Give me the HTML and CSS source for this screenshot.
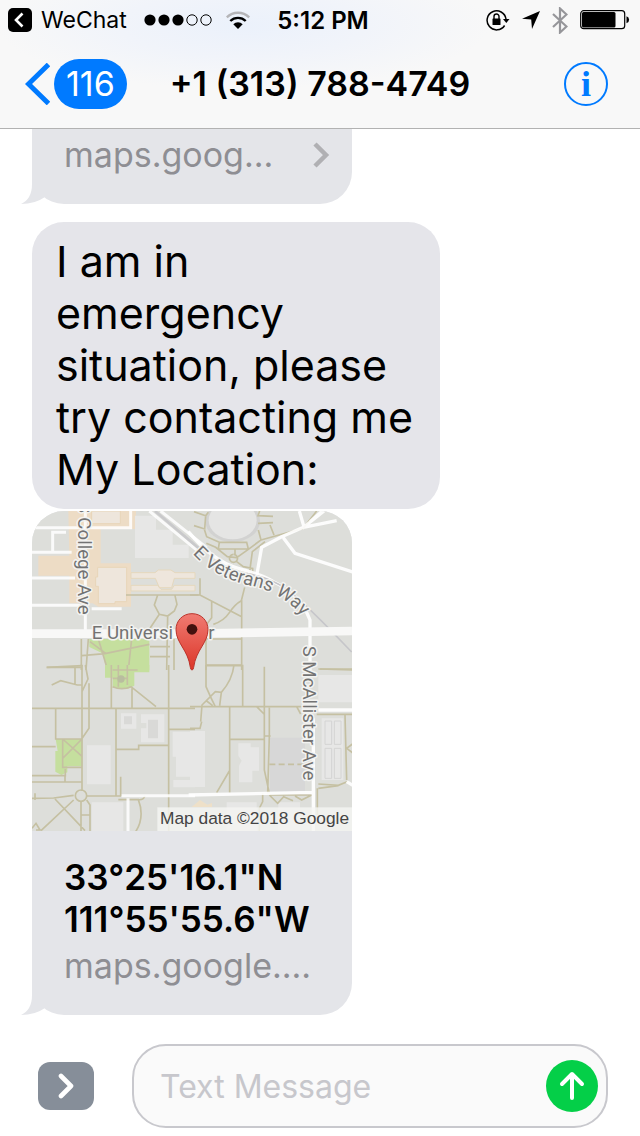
FILE: index.html
```html
<!DOCTYPE html>
<html lang="en">
<head>
<meta charset="utf-8">
<meta name="viewport" content="width=device-width, initial-scale=1">
<title>Messages</title>
<link rel="stylesheet" href="styles.css">
</head>
<body>
<header class="top">
  <div class="status">
    <div class="status-left">
      <a class="return" href="#">
        <svg width="24" height="24" viewBox="0 0 24 24" aria-hidden="true"><rect width="24" height="24" rx="5"/><path d="M14.500 5.500L8 12l6.500 6.500" fill="none" stroke="#fff" stroke-width="2.600"/></svg>
        <span>WeChat</span>
      </a>
      <svg class="signal" width="68" height="12" viewBox="0 0 68 12" aria-hidden="true"><circle cx="6" cy="6" r="5.600"/><circle cx="20" cy="6" r="5.600"/><circle cx="34" cy="6" r="5.600"/><g fill="none" stroke="#000"><circle cx="48" cy="6" r="5.200"/><circle cx="62" cy="6" r="5.200"/></g></svg>
      <svg class="wifi" width="24" height="18" viewBox="0 0 24 18" aria-hidden="true"><g fill="none" stroke-width="2.400"><path d="M.8 6.300a16 16 0 0 1 22.400 0" stroke="#b5b5b8"/><path d="M4.300 10a11 11 0 0 1 15.400 0" stroke="#000"/></g><path d="M7.300 13.200a6.700 6.700 0 0 1 9.400 0L12 18z"/></svg>
    </div>
    <span class="time">5:12 PM</span>
    <div class="status-right">
      <svg width="24" height="22" viewBox="0 0 24 22" aria-hidden="true"><path d="M18.600 16.500A9.500 9.500 0 1 1 20 10" fill="none" stroke="#000" stroke-width="1.500"/><path d="M17 10h6.500l-3.200 4z"/><rect x="6.500" y="9.500" width="8" height="6.500" rx=".6"/><path d="M8 10V7.500a2.500 2.500 0 0 1 5 0V10" fill="none" stroke="#000" stroke-width="1.400"/></svg>
      <svg width="18" height="18" viewBox="0 0 18 18" aria-hidden="true"><path d="M18 0L10 18 9.200 8.600 0 7.800z"/></svg>
      <svg width="16" height="27" viewBox="0 0 16 27" aria-hidden="true"><path d="M1 7l13.500 12.500L8 25.500V1.500L14.500 7.500 1 20" fill="none" stroke="#96969a" stroke-width="2.200"/></svg>
      <svg width="50" height="20" viewBox="0 0 50 20" aria-hidden="true"><rect x=".7" y=".7" width="44" height="18" rx="3" fill="none" stroke="#000" stroke-width="1.200"/><rect x="2" y="2" width="33.500" height="15.400" rx="1.500"/><path d="M46.500 6.300q2.600.6 2.600 3.500t-2.600 3.500z"/></svg>
    </div>
  </div>
  <nav class="nav">
    <a class="back" href="#" aria-label="Back, 116 unread">
      <svg width="25" height="42" viewBox="0 0 25 42" aria-hidden="true"><path d="M23.500 1.500L3.500 21l20 19.500" fill="none" stroke="#007aff" stroke-width="5"/></svg>
      <span class="count">116</span>
    </a>
    <h1 class="title">+1 (313) 788-4749</h1>
    <button class="info" type="button" aria-label="Details">i</button>
  </nav>
</header>

<main class="thread">
  <a class="bubble link clipped" href="#">
    <span class="url">maps.goog...</span>
    <svg width="18" height="28" viewBox="0 0 18 28" aria-hidden="true"><path d="M3 3l11 11L3 25" fill="none" stroke="#b0b0b3" stroke-width="4.500"/></svg>
    <svg class="tail" width="24" height="32" viewBox="0 0 24 32" aria-hidden="true"><path d="M11 0V12Q11 27 0 32 14 32 24 25V0z"/></svg>
  </a>
  <p class="bubble text">I am in emergency situation, please try contacting me<br>My Location:</p>
  <a class="bubble link" href="#">
    <svg class="map" viewBox="0 0 960 960" role="img" aria-label="Map of the shared location">
      <rect width="960" height="960" fill="#dddeda"/>
      <g transform="translate(-6 -18)">
        <path d="M115 18H318V72H212V175H303V305H205L188 295H118V212H25V152H118z" fill="#eddcc5"/>
        <path d="M185 18h86v38h-86zM203 187h87v103h-35v6h-50v-52h-8v-28h6z" fill="#eee6dc" stroke="#e8d5b8" stroke-width="3"/>
        <path d="M303 203h72l10-8h38l12 8h60v17h-62l-8 28h-37l-12-28h-73zM303 241h80l10 12h32l8-12h62v17H303z" fill="#eee6dc" stroke="#e5d8bd" stroke-width="3"/>
        <path d="M315 32h63v42h50v45h48v40H315z" fill="#e7e7e6"/>
        <path d="M178 402h180v94H228l-8-50-42-20z" fill="#c5df9e"/>
        <g fill="none" stroke="#fff" stroke-opacity=".85" stroke-width="9">
          <path d="M6 68H302V18M68 140V82h40M6 142H125M6 219H135M6 301H150M185 311h90"/>
          <path d="M166 18V385"/>
          <path d="M358 18L512 145M392 18L530 128"/>
        </g>
        <path d="M375 18L515 137" stroke="#c9c9cb" stroke-width="8"/>
        <g fill="none" stroke="#c5c0a2" stroke-width="5">
          <path d="M288 270H506M383 270l-10 30 15 28 25 5 20-15 8-20-6-26M388 328l-28 42M413 333l-3 162M154 402v93M175 402l-7 93M50 487l108-5M155 452l70-6 133-28M205 402l28 93M305 402l-10 93M180 410l48 36M360 425h60M360 455h60M432 402v93"/>
        </g>
      </g>
      <g transform="translate(474 -18)">
        <ellipse cx="128" cy="48" rx="82" ry="63" fill="#d2d2d1"/><ellipse cx="128" cy="46" rx="72" ry="57" fill="#e5e5e4"/>
        <g fill="none" stroke="#c5c0a2" stroke-width="5">
          <path d="M12 20l35 12 8-10M47 32L44 72l-32-10M42 70l8 25 38 17M209 18l-5 14 45 2M204 55l45-2M205 75l8 30-38 28-35 25-28-3-35-28-28-12M88 112h82l5 20H85zM135 130v20M130 148a12 12 0 1 0 1 0M140 170l20 15 28 5v20M213 105l127-35 40-52M240 60l12 30M225 110l-38 30-8 60"/>
          <path d="M0 270h30l125 65M30 220v50M65 288v50l-15 20M70 358q32-10 48-35t36-36l10-40M155 285V495M48 400v95M48 402h108M48 480h108"/>
        </g>
        <g fill="none" stroke="#fff" stroke-opacity=".9" stroke-width="10">
          <path d="M200 212l15-85 60-32 65-28 100-20M280 98l35 47 180 58M328 18l14 48 60-48M395 20l-35 30"/>
          <path d="M-5 80Q70 170 145 190T250 230Q330 265 360 345V495"/>
        </g>
        <path d="M170 206q75 12 125 50t190 185" fill="none" stroke="#c6c6ca" stroke-width="5"/>
        <path d="M390 492h100" stroke="#c5c0a2" stroke-width="5"/>
      </g>
      <path d="M0 368H480L960 360" fill="none" stroke="#f8f8f7" stroke-width="26"/>
      <g transform="translate(-6 462)">
        <path d="M225 0h133v22h-45v40l-20 10-45-4V38h-23zM77 222h80v82h-45v18l-18 8-18-10V258h7z" fill="#c5df9e"/>
        <g fill="#e7e7e6"><path d="M171 241h71v117h-71zM273 145h46v46h-46zM333 148h70v84h-70v-42h16v-16h-16zM185 412h95v98h-95zM428 200h70v135h-60v-60h-10zM430 345h65v22h-65z"/></g>
        <path d="M282 154h24v24h-24zM354 164h30v56h-30z" fill="#d9d9d7"/>
        <g fill="none" stroke="#c5c0a2" stroke-width="5">
          <path d="M50 7h105M135 7v50M65 60l27-13 50 13h12M156 0v378M166 0l8 42-18 38M177 55v135l-22 32M244 0v128M248 15h75M248 40h45M265 0v65M292 0v60M248 65q27 12 55 0l75 60M306 70v58M6 130H495M77 130v92H155M6 245H77M98 222v85h58M98 222l58 52M156 222l-58 58M6 332h100v-20M6 351h150M105 330v20M258 130V393M260 253h66V241h90M416 0V510M416 193h79M272 335v58M168 393h105M6 400l65-1 60-8M131 405l-98 92M75 402l90 95M6 490l12-15 12 20h-12M153 410v100M170 405l10 15v30h-25M180 450v60M15 385v20M265 404h60q20 52-8 96M325 404q15 2 20-12"/>
          <circle cx="153" cy="392" r="17"/>
        </g>
        <path d="M275 392H495M294 400V510" stroke="#fff" stroke-opacity=".85" stroke-width="9"/>
        <circle cx="273" cy="42" r="11" fill="#b9bd9f"/>
      </g>
      <g transform="translate(474 462)">
        <path d="M240 218h105v165H240z" fill="#d7d7d7"/>
        <g fill="#e7e7e6"><path d="M385 30h105v82H385zM395 160h65v185h-65zM0 198h45v168H0zM145 235h37v12h25v70h-20v35h-40v-50l8-15-10-15zM110 412h90v98h-90zM265 412h65v98h-65z"/></g>
        <path d="M405 168h20v70h-20zM433 168h20v70h-20zM405 250h20v90h-20zM433 250h20v90h-20z" fill="none" stroke="#d4d4d3" stroke-width="3"/>
        <g fill="none" stroke="#c5c0a2" stroke-width="5">
          <path d="M48 0v65q15 35 28 60M48 2h110v121M132 0q-5 45-38 82l-18-2-40 40-4 50M94 82l-5 40M50 108l18 14M223 5v310l15 70M0 125h345M119 125v258M119 223h104M0 190h30l5-20M118 318l-38 65M200 125l22 22M238 128v85l-5 172M222 213h20M320 125l12 22M385 12l105 3M380 148h110M465 150l5 195M490 235l-20 15 20 15M385 357l60 4 30-12M385 370l60-8M382 370v80M218 385v25l-10 20v75M238 390l25 25 18-20 28 12M240 390h125l-30 15-20-12"/>
          <path d="M238 298h105" stroke-dasharray="18 10"/>
        </g>
        <path d="M-4 390L366 382M385 135H490M370 160V510M470 350l20 12" fill="none" stroke="#fff" stroke-opacity=".9" stroke-width="10"/>
        <path d="M12 420l18-15 22 14 14-5v12H5z" fill="#eee0c8"/>
      </g>
      <g class="streets">
        <text transform="translate(137 -28) rotate(90)">S College Ave</text>
        <text x="179" y="385">E Universi</text><text x="529" y="385">r</text>
        <path id="veterans" d="M482 128Q550 202 660 225T840 354" fill="none" stroke="none"/>
        <text><textPath href="#veterans">E Veterans Way</textPath></text>
        <text transform="translate(814 404) rotate(90)">S McAllister Ave</text>
      </g>
      <rect x="376" y="889" width="584" height="71" fill="#f5f5f3" fill-opacity=".8"/>
      <text class="credit" x="384" y="940">Map data ©2018 Google</text>
      <defs><linearGradient id="pin" x1="0" y1="0" x2="0" y2="1"><stop offset="0" stop-color="#f07b72"/><stop offset="1" stop-color="#dc3528"/></linearGradient></defs>
      <path d="M480 308c-29 0-48 22-48 48 0 40 36 60 43 113q1 8 5 8t5-8c7-53 43-73 43-113 0-26-19-48-48-48z" fill="url(#pin)" stroke="#bb332a" stroke-width="3"/>
      <circle cx="480" cy="355" r="16" fill="#43110e"/>
    </svg>
    <span class="details">
      <strong class="place">33°25'16.1"N<br>111°55'55.6"W</strong>
      <span class="url">maps.google....</span>
    </span>
    <svg class="tail" width="24" height="32" viewBox="0 0 24 32" aria-hidden="true"><path d="M11 0V12Q11 27 0 32 14 32 24 25V0z"/></svg>
  </a>
</main>

<form class="composer">
  <button class="expand" type="button" aria-label="More options"><svg width="16" height="26" viewBox="0 0 16 26" aria-hidden="true"><path d="M3 3l10 10L3 23" fill="none" stroke="#fff" stroke-width="4.600" stroke-linecap="round" stroke-linejoin="round"/></svg></button>
  <div class="field">
    <input class="entry" type="text" placeholder="Text Message" aria-label="Text Message">
    <button class="send" type="button" aria-label="Send"><svg width="26" height="30" viewBox="0 0 26 30" aria-hidden="true"><path d="M3 13L13 3l10 10M13 4v23" fill="none" stroke="#fff" stroke-width="4" stroke-linecap="round" stroke-linejoin="round"/></svg></button>
  </div>
</form>
</body>
</html>
```
FILE: styles.css
```css
* { box-sizing: border-box; }

body {
  margin: 0;
  min-height: 100vh;
  display: flex;
  flex-direction: column;
  background: #fff;
  color: #000;
  font-family: Inter, "Liberation Sans", sans-serif;
}

svg { display: block; flex: none; }
a { color: inherit; text-decoration: none; }
button { border: 0; padding: 0; display: grid; place-items: center; flex: none; }

.top {
  background: radial-gradient(ellipse at 38% 20%, #ebf1fb 0%, #f1f4fa 22%, #f8f8f8 44%);
  border-bottom: 1px solid #b2b2b2;
}

.status, .nav {
  display: grid;
  grid-template-columns: 1fr auto 1fr;
  align-items: center;
}

.status { height: 40px; padding: 0 10px 0 16px; font-size: 23px; }
.status-left, .return, .status-right, .back { display: flex; align-items: center; }
.status-left { margin-left: -8px; }
.return { gap: 9px; }
.signal { margin-left: 17px; }
.wifi { margin-left: 14px; }
.status-right { justify-content: flex-end; gap: 12px; }
.time { font-size: 24px; font-weight: 600; }

.nav { height: 88px; padding: 0 32px; }
.back { gap: 4px; margin-left: -7px; }
.count {
  padding: 0 12px;
  border-radius: 25px;
  background: #007aff;
  color: #fff;
  font-size: 34px;
  line-height: 50px;
}
.title { margin: 0; font-size: 34px; font-weight: 600; line-height: 44px; }
.info {
  justify-self: end;
  width: 44px;
  height: 44px;
  border: 2px solid #007aff;
  border-radius: 50%;
  background: none;
  color: #007aff;
  font: bold 36px/40px "Liberation Serif", serif;
}

.thread {
  flex: 1;
  display: flex;
  flex-direction: column;
  align-items: flex-start;
  padding: 0 32px;
}

.bubble {
  position: relative;
  margin: 0;
  border-radius: 32px;
  background: #e5e5ea;
}
.link { width: 320px; max-width: 100%; background: #e4e5e9; }
.clipped {
  display: flex;
  align-items: center;
  justify-content: space-between;
  padding: 5px 22px 28px 32px;
  border-radius: 0 0 32px 32px;
}
.text {
  width: 408px;
  max-width: 100%;
  margin: 18px 0 2px;
  padding: 13px 16px 14px 24px;
  font-size: 43px;
  line-height: 52px;
}
.url { color: #8e8e93; font-size: 34px; line-height: 42px; }
.tail { position: absolute; left: -11px; bottom: 0; fill: #e4e5e9; }

.map { width: 100%; border-radius: 32px 32px 0 0; }
.streets {
  fill: #737373;
  stroke: #f3f3f1;
  stroke-width: 9px;
  stroke-linejoin: round;
  paint-order: stroke;
  font: 56px Roboto, sans-serif;
}
.credit { fill: #444; font: 52px "Liberation Sans", sans-serif; }

.details { display: flex; flex-direction: column; gap: 5px; padding: 25px 32px 28px; }
.place { font-size: 35px; font-weight: 600; line-height: 42px; }

.composer { display: flex; align-items: center; gap: 38px; padding: 29px 32px 8px 38px; }
.expand { width: 56px; height: 48px; border-radius: 12px; background: #868e99; }
.field {
  flex: 1;
  min-width: 0;
  display: flex;
  align-items: center;
  height: 84px;
  padding: 0 8px 0 26px;
  border: 2px solid #c8c8cd;
  border-radius: 34px;
  background: #fafafa;
}
.entry {
  flex: 1;
  min-width: 0;
  padding: 0;
  border: 0;
  outline: 0;
  background: none;
  font: 32px Inter, "Liberation Sans", sans-serif;
}
.entry::placeholder { color: #c7c7cc; opacity: 1; }
.send { width: 52px; height: 52px; border-radius: 50%; background: #04cf48; }
```
